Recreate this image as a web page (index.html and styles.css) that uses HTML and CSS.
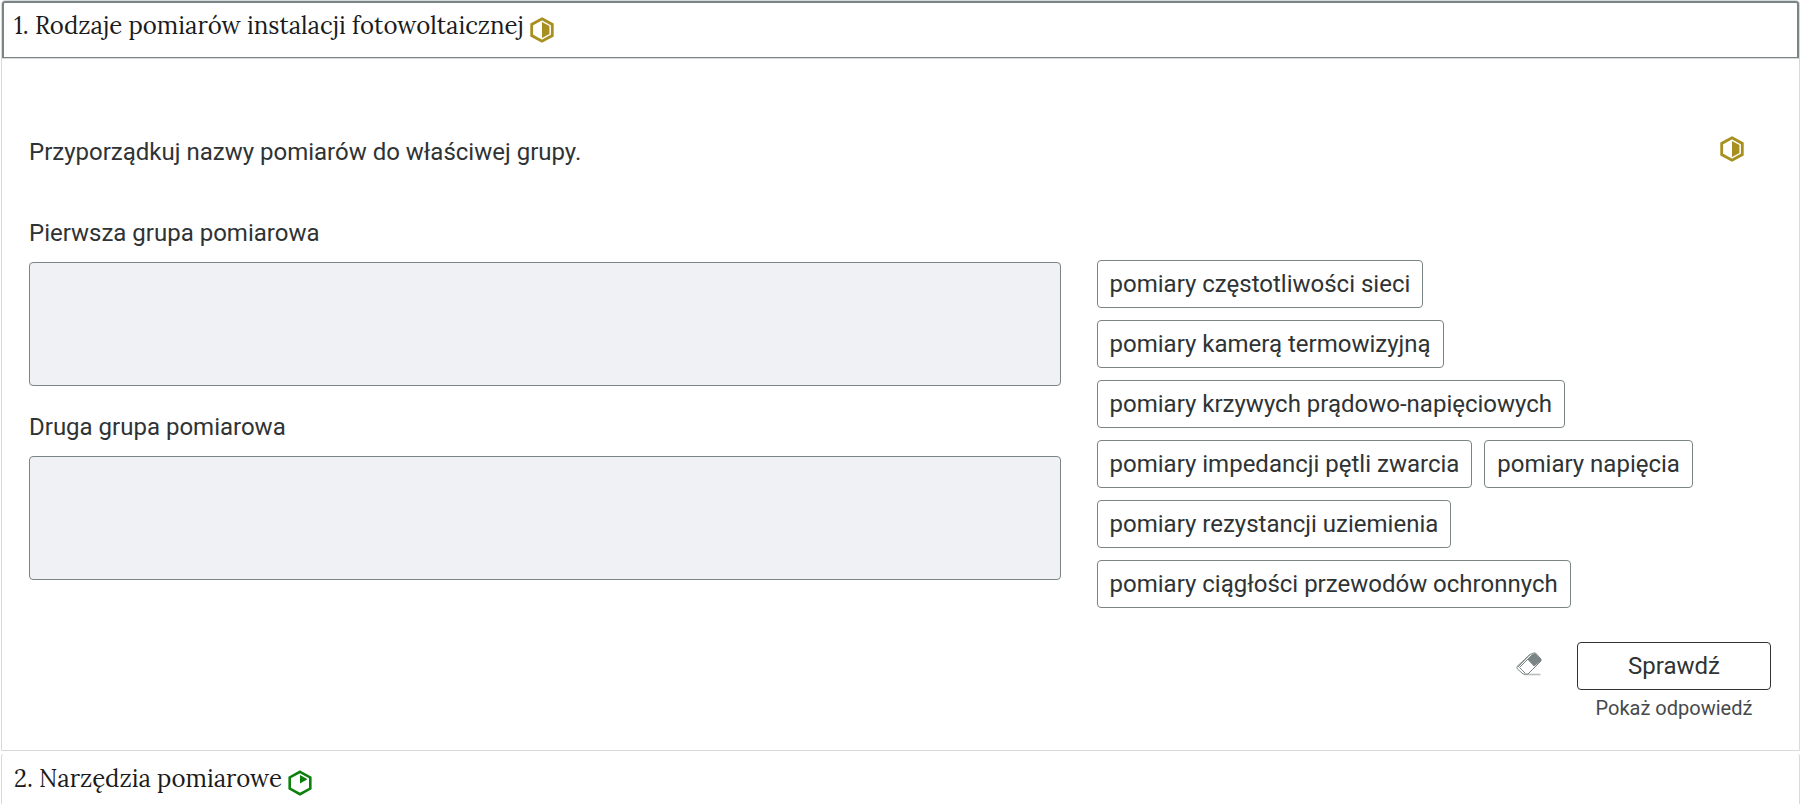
FILE: index.html
```html
<!DOCTYPE html>
<html lang="pl">

<head>
    <meta charset="UTF-8">
    <meta name="viewport" content="width=device-width, initial-scale=1.0">
    <title>Pomiary instalacji fotowoltaicznej</title>
    <link rel="stylesheet" href="styles.css">
</head>

<body>
    <!-- shared difficulty icons -->
    <svg class="sprite" aria-hidden="true">
        <symbol id="level-medium" viewBox="0 0 24 26">
            <path d="M12 1.8L22.3 7.4V18.6L12 24.2L1.7 18.6V7.4z" fill="none" stroke="currentColor" stroke-width="2.8" />
            <path d="M12 5L19.4 9V17L12 21z" fill="currentColor" />
        </symbol>
        <symbol id="level-easy" viewBox="0 0 24 26">
            <path d="M12 1.8L22.3 7.4V18.6L12 24.2L1.7 18.6V7.4z" fill="none" stroke="currentColor" stroke-width="2.6" />
            <path d="M12 5L19.5 9.2L12 13.4z" fill="currentColor" />
        </symbol>
    </svg>

    <div class="accordion">
        <section class="item">
            <h2 class="item-heading">
                <button class="item-toggle active" type="button" aria-expanded="true" aria-controls="panel-1">
                    <span>1. Rodzaje pomiarów instalacji fotowoltaicznej</span>
                    <svg class="level medium"><use href="#level-medium" /></svg>
                </button>
            </h2>
            <div id="panel-1" class="panel">
                <div class="task">
                    <p>Przyporządkuj nazwy pomiarów do właściwej grupy.</p>
                    <svg class="level medium"><use href="#level-medium" /></svg>
                </div>

                <div class="exercise">
                    <div class="groups">
                        <div class="group">
                            <h3 id="group-1">Pierwsza grupa pomiarowa</h3>
                            <div class="dropzone" role="group" aria-labelledby="group-1"></div>
                        </div>
                        <div class="group">
                            <h3 id="group-2">Druga grupa pomiarowa</h3>
                            <div class="dropzone" role="group" aria-labelledby="group-2"></div>
                        </div>
                    </div>
                    <div class="words">
                        <button class="word" type="button" draggable="true">pomiary częstotliwości sieci</button>
                        <button class="word" type="button" draggable="true">pomiary kamerą termowizyjną</button>
                        <button class="word" type="button" draggable="true">pomiary krzywych prądowo-napięciowych</button>
                        <button class="word" type="button" draggable="true">pomiary impedancji pętli zwarcia</button>
                        <button class="word" type="button" draggable="true">pomiary napięcia</button>
                        <button class="word" type="button" draggable="true">pomiary rezystancji uziemienia</button>
                        <button class="word" type="button" draggable="true">pomiary ciągłości przewodów ochronnych</button>
                    </div>
                </div>

                <div class="actions">
                    <button class="clear" type="button" aria-label="Wyczyść">
                        <svg viewBox="0 0 26 24">
                            <path d="M8 22.5H24.5" fill="none" stroke="#b9bfc0" stroke-width="1.6" />
                            <path d="M14 2.5L17.5 1H19.5L25 7V9L12 22H7L1 16.5V14.5z" fill="#fff" stroke="#7b8586" />
                            <path d="M16 2.5L11.5 7.5L18 14.5L25 9V7L19 1z" fill="#7b8586" />
                            <path d="M16 3L3.5 15.5L9 21M14 2.5L2 15" fill="none" stroke="#7b8586" />
                        </svg>
                    </button>
                    <div class="answers">
                        <button class="check" type="button">Sprawdź</button>
                        <button class="show" type="button">Pokaż odpowiedź</button>
                    </div>
                </div>
            </div>
        </section>

        <section class="item">
            <h2 class="item-heading">
                <button class="item-toggle" type="button" aria-expanded="false">
                    <span>2. Narzędzia pomiarowe</span>
                    <svg class="level easy"><use href="#level-easy" /></svg>
                </button>
            </h2>
        </section>
    </div>
</body>

</html>
```
FILE: styles.css
```css
* {
    box-sizing: border-box;
}

body {
    margin: 0;
    background-color: #fff;
    color: #2f3334;
    font-family: Roboto, "Noto Sans", sans-serif;
    font-size: 24px;
    line-height: 32px;
}

button {
    margin: 0;
    background: none;
    border: none;
    color: inherit;
    font: inherit;
    cursor: pointer;
}

h2,
h3,
p {
    margin: 0;
    font-size: inherit;
    font-weight: 400;
}

.sprite {
    display: none;
}

.accordion {
    padding: 0 2px 0 1px;
}

.item {
    border: 1px solid #d6dada;
    border-radius: 4px 4px 0 0;
}

.item + .item {
    margin-top: 2px;
    border-top-color: transparent;
    border-bottom: none;
}

.item-toggle {
    display: flex;
    gap: 6px;
    width: 100%;
    height: 57px;
    padding: 7px 10px;
    border: 2px solid transparent;
    border-bottom-width: 1px;
    border-radius: 3px 3px 0 0;
    color: #1b1b1b;
    font-family: Lora, "Liberation Serif", serif;
    font-size: 24px;
    text-align: left;
}

.item-toggle.active {
    border-color: #7b8586;
}

.item-toggle .level {
    margin-top: 7px;
}

.level {
    flex: none;
    width: 24px;
    height: 26px;
}

.medium {
    color: #a89020;
}

.easy {
    color: #0b800b;
}

.panel {
    padding: 77px 28px 26px 27px;
    border-top: 1px solid #d6dada;
}

.task {
    display: flex;
    justify-content: space-between;
    padding-right: 27px;
}

.exercise {
    display: grid;
    grid-template-columns: 26fr 17fr;
    gap: 36px;
    margin-top: 49px;
}

.group + .group {
    margin-top: 25px;
}

.dropzone {
    min-height: 124px;
    margin-top: 13px;
    background-color: #f0f1f5;
    border: 1px solid #7b8586;
    border-radius: 4px;
}

.words {
    display: flex;
    flex-wrap: wrap;
    align-content: flex-start;
    gap: 12px;
    padding-top: 43px;
}

.word {
    height: 48px;
    padding: 0 12px;
    background-color: #fff;
    border: 1px solid #7b8586;
    border-radius: 4px;
}

.actions {
    display: flex;
    justify-content: flex-end;
    gap: 35px;
    margin-top: 34px;
}

.clear {
    align-self: flex-start;
    margin-top: 10px;
    padding: 0;
}

.clear svg {
    display: block;
    width: 26px;
    height: 24px;
}

.answers {
    display: flex;
    flex-direction: column;
    align-items: center;
}

.check {
    width: 194px;
    height: 48px;
    border: 1px solid #2f3334;
    border-radius: 4px;
}

.show {
    padding: 2px 0 0;
    color: #464a4b;
    font-size: 20px;
}
```
